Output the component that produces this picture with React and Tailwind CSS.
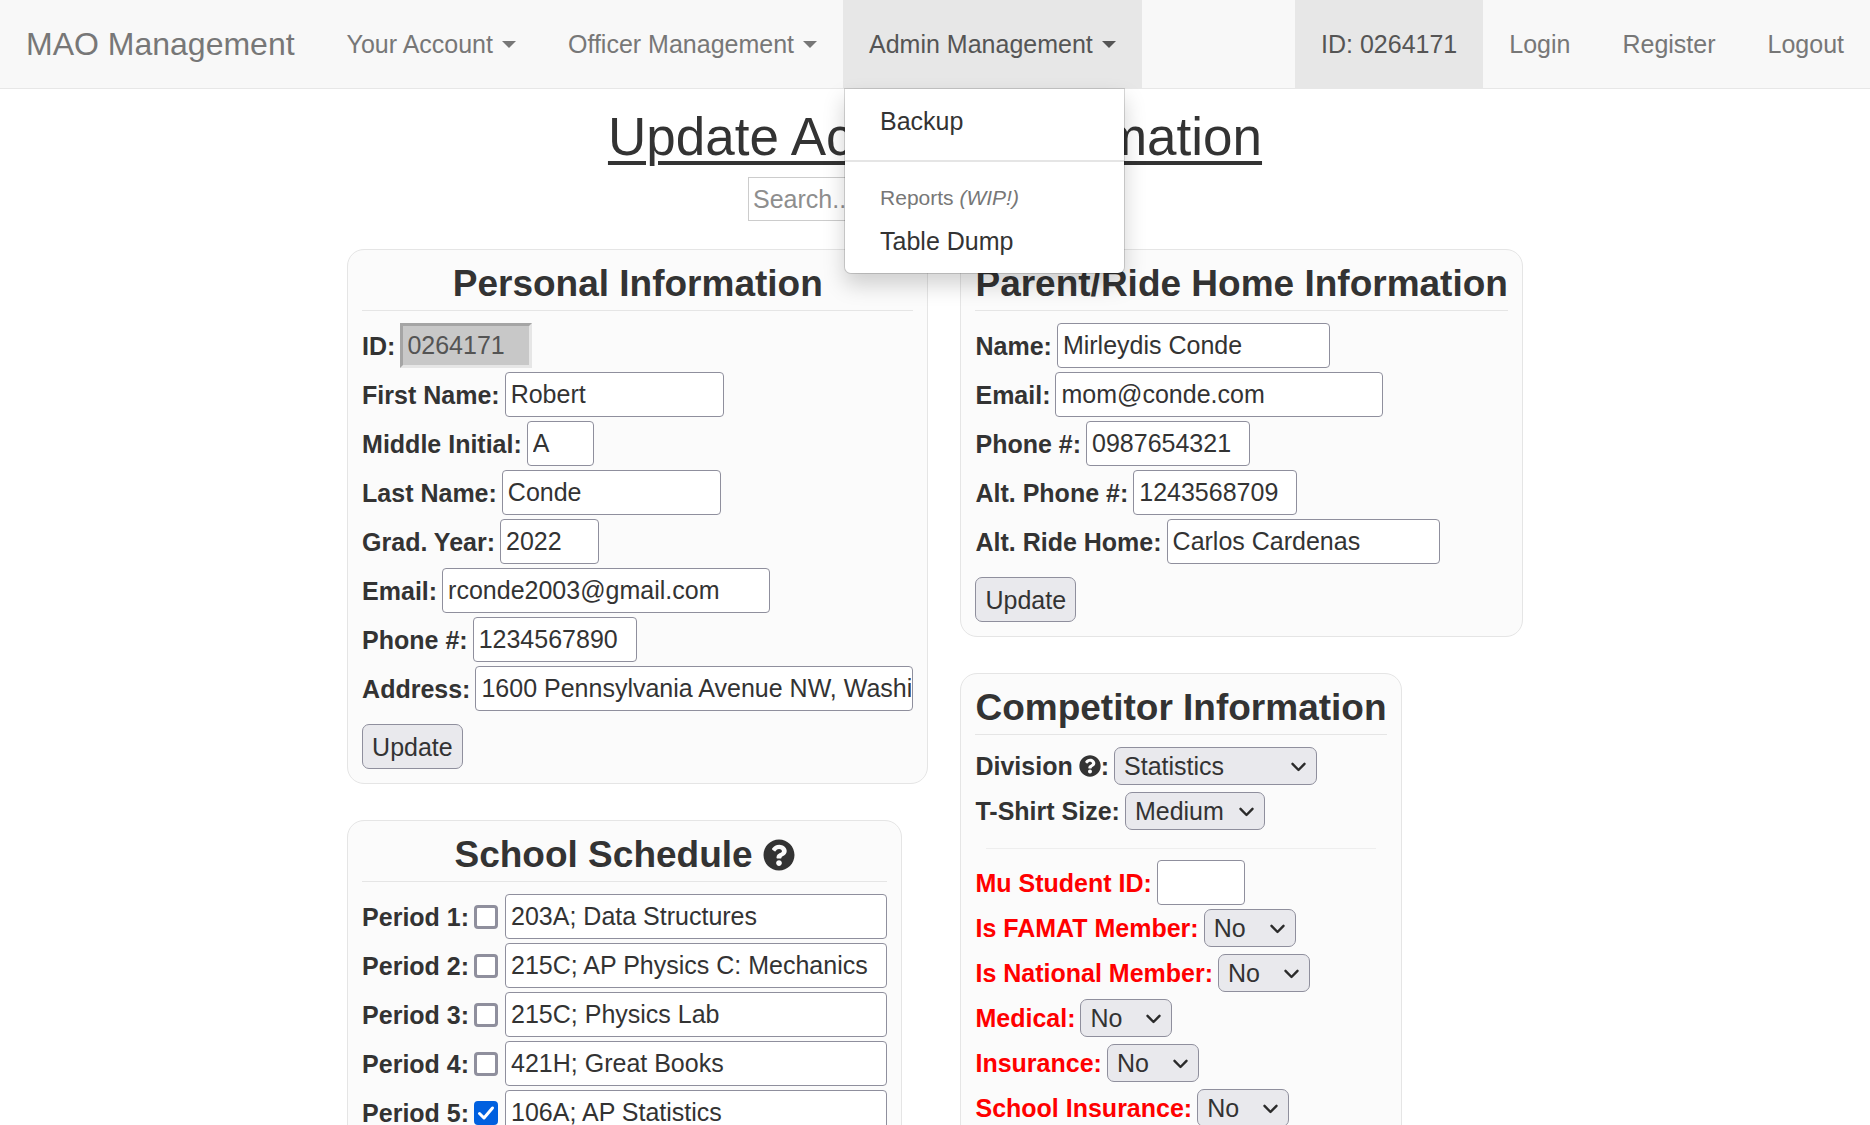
import React, { useId } from "react";
import { FaQuestionCircle } from "react-icons/fa";

function Caret() {
  return (
    <svg className="ml-[9px] h-[7px] w-[14px]" viewBox="0 0 14 7" fill="currentColor" aria-hidden="true">
      <path d="M0 0H14L7 7Z" />
    </svg>
  );
}

function NavLink({ children, active, caret }) {
  return (
    <a
      href="#"
      className={
        active
          ? "flex h-full items-center bg-[#e7e7e7] px-[26px] text-[#555]"
          : "flex h-full items-center px-[26px] text-[#777]"
      }
    >
      {children}
      {caret && <Caret />}
    </a>
  );
}

function AdminMenu() {
  return (
    <ul className="absolute top-[88px] left-px z-10 w-[281px] rounded-b-[7px] border border-black/15 bg-white bg-clip-padding py-[9px] leading-9 text-[#333] shadow-[0_11px_21px_rgba(0,0,0,0.175)]">
      <li>
        <a href="#" className="block px-[35px] py-[5px]">Backup</a>
      </li>
      <li role="separator" className="my-4 h-[2px] bg-[#e5e5e5]" />
      <li className="px-[35px] py-[5px] text-[21px] leading-[30px] text-[#777]">
        Reports <em>(WIP!)</em>
      </li>
      <li>
        <a href="#" className="block px-[35px] py-[5px]">Table Dump</a>
      </li>
    </ul>
  );
}

function Navbar() {
  return (
    <nav className="flex h-[89px] items-stretch justify-between border-b border-[#e7e7e7] bg-[#f8f8f8] whitespace-nowrap">
      <div className="flex">
        <a href="#" className="flex items-center px-[26px] text-[32px] text-[#777]">MAO Management</a>
        <ul className="flex">
          <li><NavLink caret>Your Account</NavLink></li>
          <li><NavLink caret>Officer Management</NavLink></li>
          <li className="relative">
            <NavLink caret active>Admin Management</NavLink>
            <AdminMenu />
          </li>
        </ul>
      </div>
      <ul className="flex">
        <li><NavLink active>ID: 0264171</NavLink></li>
        <li><NavLink>Login</NavLink></li>
        <li><NavLink>Register</NavLink></li>
        <li><NavLink>Logout</NavLink></li>
      </ul>
    </nav>
  );
}

function Card({ title, icon, children }) {
  return (
    <section className="rounded-[17px] border border-[#e5e5e5] bg-[#fbfbfb] p-[14px]">
      <h2 className="mb-3 flex items-center justify-center gap-2.5 border-b border-[#e5e5e5] pb-[6px] text-[37px] leading-10 font-bold whitespace-nowrap">
        {title}
        {icon && <FaQuestionCircle className="size-8" />}
      </h2>
      {children}
    </section>
  );
}

const inputBase = "h-[45px] rounded-[4px] border border-[#8f8f9d] bg-white pr-px pl-[5px] text-[#333] outline-none";

function Field({ label, value, width, red }) {
  const id = useId();
  return (
    <div className="mb-1 flex items-center gap-[5px] whitespace-nowrap">
      <label htmlFor={id} className={red ? "font-bold text-[#f00]" : "font-bold"}>{label}</label>
      <input id={id} type="text" defaultValue={value} className={`${inputBase} ${width}`} />
    </div>
  );
}

function LockedField({ label, value }) {
  const id = useId();
  return (
    <div className="mb-1 flex h-[45px] items-center gap-[5px]">
      <label htmlFor={id} className="font-bold">{label}</label>
      <input
        id={id}
        type="text"
        disabled
        defaultValue={value}
        className="h-[45px] w-[132px] border-[3px] border-t-[#a5a5a5] border-r-[#e6e6e6] border-b-[#e6e6e6] border-l-[#a5a5a5] bg-[#c8c8c8] px-1 text-[#545454]"
      />
    </div>
  );
}

function SelectField({ label, value, width, red, help }) {
  const id = useId();
  return (
    <div className="mb-[7px] flex items-center gap-[5px] whitespace-nowrap">
      <label htmlFor={id} className={red ? "font-bold text-[#f00]" : "flex items-center font-bold"}>
        {label}
        {help && <FaQuestionCircle className="ml-[6px] size-[22px]" />}
        {help && ":"}
      </label>
      <div className="relative">
        <select
          id={id}
          defaultValue={value}
          className={`${width} block h-[38px] appearance-none rounded-[7px] border border-[#8f8f9d] bg-[#e9e9ed] px-[9px] text-[#333]`}
        >
          <option>{value}</option>
        </select>
        <svg
          className="pointer-events-none absolute top-[15px] right-[11px] h-[10px] w-[15px]"
          viewBox="0 0 15 10"
          fill="none"
          stroke="#2b2b2b"
          strokeWidth="2.4"
          strokeLinecap="round"
          strokeLinejoin="round"
          aria-hidden="true"
        >
          <path d="M1.5 1.8L7.5 8L13.5 1.8" />
        </svg>
      </div>
    </div>
  );
}

function Period({ number, value, checked }) {
  const id = useId();
  return (
    <div className="mb-1 flex items-center gap-[5px] leading-7 whitespace-nowrap">
      <label htmlFor={id} className="font-bold">Period {number}:</label>
      <span className="relative mr-[2px] size-6">
        <input
          type="checkbox"
          defaultChecked={checked}
          aria-label={`Period ${number} selected`}
          className="peer block size-6 appearance-none rounded-[4px] border-[3px] border-[#8f8f9d] bg-white checked:border-[#0060df] checked:bg-[#0060df]"
        />
        <svg
          className="pointer-events-none absolute inset-0 hidden size-6 peer-checked:block"
          viewBox="0 0 24 24"
          fill="none"
          stroke="#fff"
          strokeWidth="3"
          strokeLinecap="round"
          strokeLinejoin="round"
          aria-hidden="true"
        >
          <path d="M5.5 12.5L10 17L18.5 7" />
        </svg>
      </span>
      <input id={id} type="text" defaultValue={value} className={`${inputBase} w-[382px]`} />
    </div>
  );
}

function UpdateButton() {
  return (
    <button type="button" className="mt-[13px] block h-[45px] rounded-[7px] border border-[#8f8f9d] bg-[#e9e9ed] px-[9px]">
      Update
    </button>
  );
}

const periods = [
  { number: 1, value: "203A; Data Structures" },
  { number: 2, value: "215C; AP Physics C: Mechanics" },
  { number: 3, value: "215C; Physics Lab" },
  { number: 4, value: "421H; Great Books" },
  { number: 5, value: "106A; AP Statistics", checked: true },
];

const requirements = ["Is FAMAT Member:", "Is National Member:", "Medical:", "Insurance:", "School Insurance:"];

export default function App() {
  return (
    <div className="h-screen overflow-hidden bg-white font-['Liberation_Sans',Arial,sans-serif] text-[25px] leading-9 text-[#333]">
      <Navbar />
      <main className="flex flex-col items-center">
        <h1 className="mt-[19px] text-[53px] leading-[58px] underline decoration-4 underline-offset-[6px]">
          Update Account Information
        </h1>
        <input
          type="search"
          aria-label="Search"
          placeholder="Search..."
          className="mt-[11px] h-11 w-[374px] border border-[#ccc] bg-white px-1 placeholder:text-[#8e8e8e]"
        />
        <div className="mt-7 flex items-start justify-center gap-8">
          <div className="flex flex-col items-start gap-9">
            <Card title="Personal Information">
              <LockedField label="ID:" value="0264171" />
              <Field label="First Name:" value="Robert" width="w-[219px]" />
              <Field label="Middle Initial:" value="A" width="w-[67px]" />
              <Field label="Last Name:" value="Conde" width="w-[219px]" />
              <Field label="Grad. Year:" value="2022" width="w-[99px]" />
              <Field label="Email:" value="rconde2003@gmail.com" width="w-[328px]" />
              <Field label="Phone #:" value="1234567890" width="w-[164px]" />
              <Field label="Address:" value="1600 Pennsylvania Avenue NW, Washington, DC" width="w-[438px]" />
              <UpdateButton />
            </Card>
            <Card title="School Schedule" icon>
              {periods.map((p) => (
                <Period key={p.number} {...p} />
              ))}
            </Card>
          </div>
          <div className="flex flex-col items-start gap-9">
            <Card title="Parent/Ride Home Information">
              <Field label="Name:" value="Mirleydis Conde" width="w-[273px]" />
              <Field label="Email:" value="mom@conde.com" width="w-[328px]" />
              <Field label="Phone #:" value="0987654321" width="w-[164px]" />
              <Field label="Alt. Phone #:" value="1243568709" width="w-[164px]" />
              <Field label="Alt. Ride Home:" value="Carlos Cardenas" width="w-[273px]" />
              <UpdateButton />
            </Card>
            <Card title="Competitor Information">
              <SelectField label="Division" help value="Statistics" width="w-[203px]" />
              <SelectField label="T-Shirt Size:" value="Medium" width="w-[140px]" />
              <hr className="mx-[11px] mt-[18px] mb-[11px] border-[#eee]" />
              <Field label="Mu Student ID:" value="" width="w-[88px]" red />
              {requirements.map((label) => (
                <SelectField key={label} label={label} value="No" width="w-[92px]" red />
              ))}
            </Card>
          </div>
        </div>
      </main>
    </div>
  );
}
